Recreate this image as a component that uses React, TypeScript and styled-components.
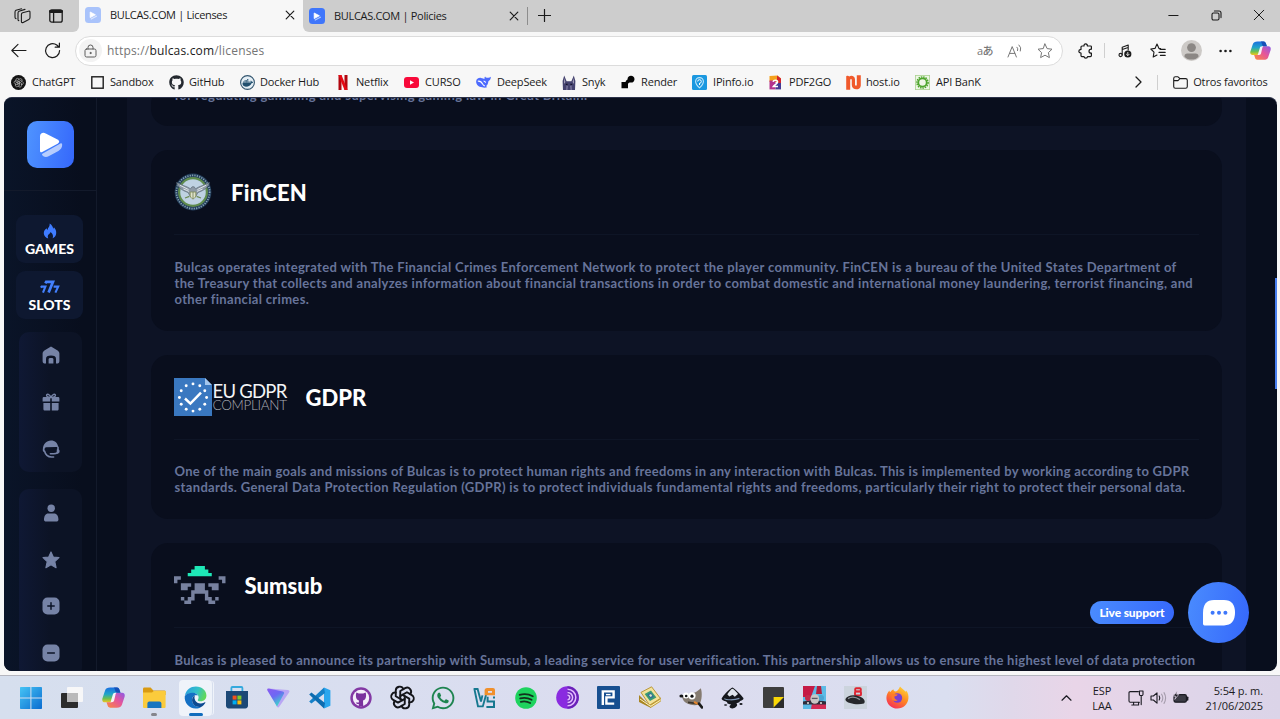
import React from "react";
import styled, { createGlobalStyle } from "styled-components";
import { FaGithub, FaWhatsapp, FaDocker } from "react-icons/fa6";
import { TbBrandOpenai } from "react-icons/tb";

const GlobalStyle = createGlobalStyle`
  * { box-sizing: border-box; }
  body { margin: 0; background: #f7f7f7; font-family: "Open Sans", "Noto Sans", sans-serif; }
  svg { display: block; flex: none; }
`;

/* ---------- browser window ---------- */
const Window = styled.div`
  width: 1280px;
  height: 719px;
  display: flex;
  flex-direction: column;
  overflow: hidden;
  background: #f7f7f7;
  color: #1b1b1b;
`;

const TabStrip = styled.div`
  height: 32px;
  flex: none;
  display: flex;
  align-items: stretch;
  background: #cdcdcd;
`;

const StripTools = styled.div`
  width: 79px;
  display: flex;
  align-items: center;
  gap: 18px;
  padding: 0 0 1px 14px;
  border-bottom-right-radius: 6px;
  background: #cdcdcd;
`;

const StripShade = styled.div`
  display: flex;
  background: #f7f7f7;
`;

const StripRest = styled.div<{ $curved?: boolean }>`
  flex: 1;
  display: flex;
  align-items: center;
  padding-bottom: 1px;
  background: #cdcdcd;
  border-bottom-left-radius: ${(p) => (p.$curved ? "6px" : "0")};
`;

const Tab = styled.div<{ $active?: boolean; $width: number }>`
  width: ${(p) => p.$width}px;
  height: ${(p) => (p.$active ? 32 : 30)}px;
  display: flex;
  align-items: center;
  padding: 0 9px ${(p) => (p.$active ? 2 : 0)}px 6px;
  border-radius: ${(p) => (p.$active ? "7px 7px 0 0" : "0")};
  background: ${(p) => (p.$active ? "#f7f7f7" : "transparent")};
`;

const TabTitle = styled.span<{ $track: number }>`
  flex: 1;
  margin-left: 9px;
  font-size: 11px;
  line-height: 16px;
  letter-spacing: ${(p) => p.$track}px;
  white-space: nowrap;
`;

const StripDivider = styled.span`
  width: 1px;
  height: 18px;
  margin-right: 10px;
  background: #8d8d8d;
`;

const WindowControls = styled.div`
  margin-left: auto;
  display: flex;
  gap: 32px;
  padding-right: 16px;
`;

const Toolbar = styled.div`
  height: 37px;
  flex: none;
  display: flex;
  align-items: center;
  padding: 0 9px 0 10px;
`;

const NavButtons = styled.div`
  display: flex;
  gap: 17px;
  width: 65px;
`;

const AddressBar = styled.div`
  width: 988px;
  height: 30px;
  display: flex;
  align-items: center;
  padding: 0 9px 0 3px;
  border: 1px solid #dcdcdc;
  border-radius: 15px;
  background: #fff;
`;

const LockBadge = styled.span`
  width: 23px;
  height: 23px;
  display: grid;
  place-items: center;
  border-radius: 50%;
  background: #f3f3f3;
`;

const Url = styled.span`
  flex: 1;
  margin-left: 5px;
  font-size: 12px;
  line-height: 17px;
  letter-spacing: 0.18px;
  color: #757575;
  b { font-weight: 400; color: #1b1b1b; }
`;

const AddressTools = styled.div`
  display: flex;
  align-items: center;
  gap: 14px;
  color: #777;
`;

const Translate = styled.span`
  font: 500 11px/14px "Open Sans", "Noto Sans CJK JP", sans-serif;
  letter-spacing: -0.5px;
`;

const ToolbarTools = styled.div`
  flex: 1;
  display: flex;
  align-items: center;
  padding-left: 14.5px;
`;

const ToolSlot = styled.span<{ $before: number }>`
  margin-left: ${(p) => p.$before}px;
`;

const ThinRule = styled.span<{ $h: number }>`
  display: block;
  width: 1px;
  height: ${(p) => p.$h}px;
  background: #cfcfcf;
`;

const Bookmarks = styled.div`
  height: 28px;
  flex: none;
  display: flex;
  align-items: center;
  padding: 0 12.5px 2px 11px;
  font-size: 11px;
  line-height: 16px;
  letter-spacing: -0.16px;
  white-space: nowrap;
`;

const Bookmark = styled.div<{ $width?: number; $gap?: number }>`
  width: ${(p) => (p.$width ? `${p.$width}px` : "auto")};
  flex: none;
  display: flex;
  align-items: center;
  gap: ${(p) => p.$gap ?? 6}px;
`;

const BookmarkEnd = styled.div`
  margin-left: auto;
  display: flex;
  align-items: center;
  gap: 15px;
`;

/* ---------- web page ---------- */
const PageFrame = styled.div`
  height: 574px;
  flex: none;
  display: flex;
  padding: 0 3px 0 4px;
`;

const Page = styled.div`
  position: relative;
  width: 1273px;
  height: 574px;
  display: flex;
  overflow: hidden;
  border-radius: 8px;
  border-top: 1px solid #2b3148;
  background: #080e1d;
  font-family: Lato, sans-serif;
`;

const Sidebar = styled.div`
  width: 93px;
  flex: none;
  border-right: 1px solid #131a2b;
  background: linear-gradient(90deg, #0a1428, #080e1d 85%);
`;

const LogoBox = styled.div`
  height: 93px;
  display: grid;
  place-items: center;
  border-bottom: 1px solid #131a2b;
  margin-bottom: 23.5px;
`;

const Logo = styled.div`
  width: 47px;
  height: 47px;
  border-radius: 10px;
  background: linear-gradient(100deg, #4f94ff, #3567fb);
`;

const ModeButton = styled.div`
  width: 67px;
  height: 48px;
  margin: 0 0 8px 12px;
  display: flex;
  flex-direction: column;
  align-items: center;
  padding-top: 8px;
  border-radius: 9px;
  background: #0e1830;
  color: #fff;
  font-size: 14px;
  font-weight: 900;
  line-height: 20px;
`;

const IconGroup = styled.div`
  width: 63px;
  margin: 13.5px 0 17px 15px;
  border-radius: 10px;
  background: linear-gradient(90deg, #0f1834, #0c1325 50%);
`;

const IconCell = styled.div`
  height: 46.8px;
  display: grid;
  place-items: center;
  color: #7683a6;
`;

const Content = styled.div`
  width: 1119px;
  flex: none;
  margin-left: 30px;
  padding: 0 24px;
  background: #0d1325;
`;

const Card = styled.section<{ $cut?: boolean }>`
  padding: ${(p) => (p.$cut ? "0 23px 23px" : "23px 23px 24px")};
  margin-top: ${(p) => (p.$cut ? "-11px" : "24px")};
  border-radius: 17px;
  background: #090e1d;
`;

const CardHead = styled.div`
  height: 62px;
  display: flex;
  align-items: flex-start;
  gap: 19.5px;
  border-bottom: 1px solid #0e1526;
  margin-bottom: 23.5px;
`;

const CardTitle = styled.h2<{ $track?: number }>`
  margin: 0 0 0 -0.5px;
  color: #fff;
  font-size: 22px;
  font-weight: 900;
  line-height: 39px;
  letter-spacing: ${(p) => p.$track ?? 0}px;
`;

const Line = styled.div<{ $track: number }>`
  padding-left: 0.5px;
  color: #67749a;
  font-size: 13px;
  font-weight: 700;
  line-height: 16px;
  letter-spacing: ${(p) => p.$track}px;
  white-space: nowrap;
`;

const ScrollThumb = styled.div`
  position: absolute;
  right: 0;
  top: 180px;
  width: 2px;
  height: 111px;
  background: #4a80f0;
`;

const SupportLabel = styled.div`
  position: absolute;
  right: 103px;
  top: 503px;
  width: 84px;
  height: 23px;
  border-radius: 12px;
  background: linear-gradient(100deg, #4a8cfe, #3668fb);
  color: #fff;
  font-size: 12px;
  font-weight: 900;
  line-height: 23px;
  letter-spacing: -0.14px;
  text-align: center;
`;

const SupportButton = styled.div`
  position: absolute;
  right: 28px;
  top: 484px;
  width: 61px;
  height: 61px;
  display: grid;
  place-items: center;
  border-radius: 50%;
  background: linear-gradient(100deg, #4a8cfe, #3567fb);
`;

/* ---------- taskbar ---------- */
const Taskbar = styled.div`
  height: 44px;
  flex: none;
  margin-top: 4px;
  display: flex;
  align-items: center;
  padding: 0 17px 0 10px;
  border-top: 1px solid #b5b6bf;
  background: linear-gradient(90deg, #d6dfee 0, #d9def0 28%, #dcdcef 55%, #dadff0 74%, #e0d8ea 79%, #e9d5e8 84%, #ded5e9 94%, #dbd4e8 100%);
`;

const AppSlot = styled.div<{ $mark?: "running" | "focused" }>`
  position: relative;
  width: 41.27px;
  height: 43px;
  flex: none;
  display: grid;
  place-items: center;
  &::after {
    content: "";
    position: absolute;
    bottom: 3px;
    left: calc(50% - ${(p) => (p.$mark === "focused" ? 7 : 3)}px);
    width: ${(p) => (p.$mark === "focused" ? 14 : p.$mark ? 6 : 0)}px;
    height: 3px;
    border-radius: 2px;
    background: ${(p) => (p.$mark === "focused" ? "#0f6cbd" : "#85858c")};
  }
`;

const AppTile = styled.div<{ $focused?: boolean }>`
  width: 33px;
  height: 36px;
  display: grid;
  place-items: center;
  border-radius: 4px;
  background: ${(p) => (p.$focused ? "#eff3fa" : "transparent")};
  box-shadow: ${(p) => (p.$focused ? "2px 0 0 -1px #d6deed, 3px 0 0 -1px #eff3fa" : "none")};
`;

const Tray = styled.div`
  margin-left: auto;
  display: flex;
  align-items: center;
  font-size: 11px;
  line-height: 15px;
  letter-spacing: -0.08px;
  color: #1b1b22;
`;

const Stack = styled.div<{ $align: string; $width: number }>`
  width: ${(p) => p.$width}px;
  text-align: ${(p) => p.$align};
  white-space: nowrap;
`;

const TrayIcons = styled.div`
  display: flex;
  align-items: center;
  gap: 6px;
  margin-left: -4px;
  padding-right: 1px;
`;

/* ---------- small drawings ---------- */
const stroke = { fill: "none", stroke: "currentColor", strokeLinecap: "round", strokeLinejoin: "round" } as const;

const Favicon = ({ faded }: { faded?: boolean }) => (
  <svg width="16" height="16" viewBox="0 0 16 16">
    <rect width="16" height="16" rx="3.5" fill={faded ? "#a9c3fb" : "#3f76fb"} />
    <path d="M5.2 5 L10.4 7.8 L5.2 10.6Z" fill="#fff" stroke="#fff" strokeWidth=".8" strokeLinejoin="round" />
    <path d="M6.2 12 L11.4 9.2" stroke="#fff" strokeOpacity=".6" strokeWidth="1.2" strokeLinecap="round" />
  </svg>
);

const Cross = ({ size = 8, w = 1.2 }: { size?: number; w?: number }) => (
  <svg width={size} height={size} viewBox="0 0 8 8" {...stroke} strokeWidth={w} overflow="visible">
    <path d="M0.2 0.2 L7.8 7.8 M7.8 0.2 L0.2 7.8" />
  </svg>
);

const OpenAiBadge = () => (
  <svg width="15" height="15" viewBox="0 0 15 15">
    <circle cx="7.5" cy="7.5" r="7.5" fill="#141414" />
    <TbBrandOpenai x="2.2" y="2.2" width="10.6" height="10.6" color="#c9c9c9" strokeWidth={1.4} />
  </svg>
);

const DockerBadge = () => (
  <svg width="15" height="15" viewBox="0 0 15 15">
    <circle cx="7.5" cy="7.5" r="6.9" fill="#e4eef5" stroke="#33566f" strokeWidth="1.1" />
    <FaDocker x="2.3" y="2.3" width="10.4" height="10.4" color="#21506f" />
  </svg>
);

const NetflixMark = () => (
  <svg width="10" height="15" viewBox="0 0 10 15">
    <path d="M0.5 0H3.5V15H0.5Z M6.5 0H9.5V15H6.5Z" fill="#b1060f" />
    <path d="M0.5 0H3.5L9.5 15H6.5Z" fill="#e50914" />
  </svg>
);

const YoutubeMark = () => (
  <svg width="15" height="11" viewBox="0 0 15 11">
    <rect width="15" height="11" rx="3" fill="#f8093a" />
    <path d="M6 3.2 L10 5.5 L6 7.8Z" fill="#fff" />
  </svg>
);

const DeepSeekMark = () => (
  <svg width="15" height="12" viewBox="0 0 15 12">
    <path
      d="M8.6 3 C8.2 2 8.7 1 9.1 .5 C9.8 1.8 11 2 12.2 1.8 C13.2 1.7 14 1.3 14.9 .8 C14.8 3.3 13.6 4.7 12.4 5.2 C12.2 7.5 11.3 9 10.2 10 L11 11.2 C9.5 11.8 7.6 11.7 6.2 11.3 C2.6 11.1 0.2 8.8 .1 5.6 C.3 2.7 2.6 1.6 5 1.9 C6.5 2 7.7 2.5 8.6 3Z"
      fill="#4d6bfe"
    />
    <path d="M1.8 5.2 C3.6 4.8 5.6 6 6.8 8.2 C7.4 9.2 8 9.7 8.8 9.9 M7.6 5 C8.7 5.1 9.5 5.8 9.6 6.8" fill="none" stroke="#fff" strokeWidth="1.1" />
  </svg>
);

const SnykMark = () => (
  <svg width="14" height="15" viewBox="0 0 14 15">
    <path d="M1 15 L.6 6 L2.2 .5 L4.6 6.2 H9.4 L11.8 .5 L13.4 6 L13 15Z" fill="#45436f" />
    <path d="M2.2 3 L3.4 7 L2 9Z M11.8 3 L10.6 7 L12 9Z" fill="#a9a5bd" />
    <path d="M4.4 10.5 L6 11 L5.5 15 H4Z M9.6 10.5 L8 11 L8.5 15 H10Z" fill="#77739a" />
    <path d="M3.8 9.4H5.6 M8.4 9.4H10.2" stroke="#16142c" strokeWidth="1.1" />
  </svg>
);

const RenderMark = () => (
  <svg width="14" height="14" viewBox="0 0 14 14">
    <path d="M.5 7 H4.6 C4.8 5.6 5.6 5.4 6.5 4.6 C6.5 2 8 .8 10 .8 C12 .8 13.5 2.2 13.5 4.2 C13.5 6.2 12 7.6 10 7.6 C8.2 7.6 7.4 8 7 9 V13.2 H.5Z" fill="#050505" />
  </svg>
);

const IpInfoMark = () => (
  <svg width="15" height="15" viewBox="0 0 15 15">
    <rect width="15" height="15" rx="1.5" fill="#1b98e0" />
    <path d="M7.5 12.8 C5 10.5 3.6 8.8 3.6 6.5 A3.9 3.9 0 0 1 11.4 6.5 C11.4 8.8 10 10.5 7.5 12.8Z" fill="none" stroke="#bfe6fb" strokeWidth="1.1" />
    <path d="M7.5 10 V8 M5.7 6.5 a1.8 1.8 0 1 1 1.8 1.8" fill="none" stroke="#fff" strokeWidth="1" />
  </svg>
);

const PdfMark = () => (
  <svg width="13" height="15" viewBox="0 0 13 15">
    <path d="M.5 1 L8.6 .4 L12 3.5 V7 H.5Z" fill="#f5a21c" />
    <path d="M8 .4 L12 3.5 V9 H8Z" fill="#d2262d" />
    <path d="M.5 5.5 H6.5 V14.4 H.5Z" fill="#b3328d" />
    <path d="M6.5 8 H12 V14.4 H6.5Z" fill="#463a94" />
    <path d="M4 6.8 C4.6 4.8 8.6 4.8 8.6 7 C8.6 8.8 5.6 9.4 4.2 11.6 H9" fill="none" stroke="#fff" strokeWidth="1.5" />
  </svg>
);

const HostMark = () => (
  <svg width="15" height="15" viewBox="0 0 15 15" fill="#f0592b">
    <path d="M.2 1.2 C1.4 .4 2.6 .6 3.2 1.4 C5.6 -.2 9 1.2 9 4.4 V9.6 C9 11 10.6 11.2 10.8 10 V.2 H14.8 V10.4 C14.6 15.4 6 16 5.8 10 V5 C5.8 3.8 4.2 3.8 4.2 5 V14.8 H.2Z" />
  </svg>
);

const ApiMark = () => (
  <svg width="15" height="15" viewBox="0 0 15 15">
    <rect x=".4" y=".4" width="14.2" height="14.2" fill="#eef6e6" stroke="#a9d390" strokeWidth=".8" />
    <circle cx="7.5" cy="7.5" r="5.6" fill="none" stroke="#4ea52d" strokeWidth="1.5" strokeDasharray="1.5 .9" />
    <circle cx="7.5" cy="7.5" r="4.2" fill="none" stroke="#4ea52d" strokeWidth="1.8" />
  </svg>
);

const Ribbon = ({ size, id }: { size: number; id: string }) => (
  <svg width={size} height={size * 0.92} viewBox="0 0 24 22">
    <defs>
      <linearGradient id={`${id}a`} x1="0" y1="0" x2="0" y2="1">
        <stop offset="0" stopColor="#1b6fe0" />
        <stop offset=".45" stopColor="#1fa5c9" />
        <stop offset=".75" stopColor="#6fc04f" />
        <stop offset="1" stopColor="#f5c51c" />
      </linearGradient>
      <linearGradient id={`${id}b`} x1="1" y1="0" x2="0" y2="1">
        <stop offset="0" stopColor="#8a5be8" />
        <stop offset=".45" stopColor="#e5559b" />
        <stop offset="1" stopColor="#fb8a3c" />
      </linearGradient>
    </defs>
    <path d="M8.5 .5 H15.5 C17.5 .5 18 2 18.6 4 L19.3 6 H16 C14 6 13.3 7 12.8 8.6 L10.8 14.2 C10.3 15.7 9.4 16 8 16 H3 C.6 16 -.2 14 .5 11.6 L3.2 3.6 C4 1.4 5.5 .5 8.5 .5Z" fill={`url(#${id}a)`} />
    <path d="M15.5 21.5 H8.5 C6.5 21.5 6 20 5.4 18 L4.7 16 H8 C10 16 10.7 15 11.2 13.4 L13.2 7.8 C13.7 6.3 14.6 6 16 6 H21 C23.4 6 24.2 8 23.5 10.4 L20.8 18.4 C20 20.6 18.5 21.5 15.5 21.5Z" fill={`url(#${id}b)`} />
    <path d="M12 .5 H15.5 C17.5 .5 18 2 18.6 4 L19.3 6 H15.3 C14.5 6 14 4.5 13.6 3 C13.2 1.5 12.8 .8 12 .5Z" fill="#1550b8" />
    <path d="M11.4 7.4 C11.8 6.2 13 6 15.6 6 C14.6 6.4 14.4 7 14 8.2 L12.6 14.2 C12.2 15.6 11 16 8.4 16 C9.4 15.4 9.2 14.6 9.6 13.4Z" fill="#f4f4f8" />
  </svg>
);

/* ---------- page drawings ---------- */
const Seal = () => (
  <svg width="38" height="38" viewBox="0 0 38 38">
    <circle cx="19" cy="19" r="18.4" fill="#243f5c" />
    <circle cx="19" cy="19" r="16.6" fill="none" stroke="#8fa9b9" strokeWidth="1.7" strokeDasharray="1.1 1.3" />
    <circle cx="19" cy="19" r="13.9" fill="#b9cfdf" stroke="#5f8b4c" strokeWidth="2.2" />
    <circle cx="19" cy="19" r="12" fill="#bfd2e2" />
    <path d="M2.5 9.5 C8 12.4 12.5 13 16.5 15.8 L18 13.8 H20.2 L21.5 15.8 C25.5 13 30 12.4 35.5 9.5 C34 14.5 30 17.5 24 19.5 L22 23 H16 L14 19.5 C8 17.5 4 14.5 2.5 9.5Z" fill="#8e9aa6" stroke="#54636f" strokeWidth=".6" />
    <path d="M6 12.3 L14.6 16.6 M9.5 16 L15 18.4 M32 12.3 L23.4 16.6 M28.5 16 L23 18.4" stroke="#e6edf1" strokeWidth=".9" />
    <path d="M16.2 19 H21.8 V22.5 C21.8 25 19 26 19 26 S16.2 25 16.2 22.5Z" fill="#e0e3c9" stroke="#7e8a50" strokeWidth=".8" />
    <path d="M19 19V26" stroke="#6d7b57" strokeWidth=".8" />
    <path d="M11 25 L15.4 23.4 M27 25 L22.6 23.4" stroke="#6c8a54" strokeWidth="1.2" />
  </svg>
);

const GdprLogo = styled.div`
  width: 112.5px;
  display: flex;
`;
const GdprWords = styled.div`
  padding: 6px 0 0 0.5px;
  font-family: Lato, sans-serif;
  white-space: nowrap;
`;
const GdprTop = styled.div`
  color: #f3f4f6;
  font-size: 18.5px;
  line-height: 15px;
  letter-spacing: -0.75px;
`;
const GdprBottom = styled.div`
  color: #a9acb4;
  font-size: 13.5px;
  font-weight: 300;
  line-height: 13px;
  letter-spacing: -0.3px;
`;

const GdprMark = () => (
  <svg width="38" height="38" viewBox="0 0 38 38">
    <path d="M0 0 H31 L38 7 V38 H0Z" fill="#3a78c0" />
    <path d="M31 0 L38 7 H31Z" fill="#a4c6ec" />
    {Array.from({ length: 12 }, (_, i) => {
      const a = (i * Math.PI) / 6;
      return <circle key={i} cx={19 + 13.6 * Math.sin(a)} cy={19.5 - 13.6 * Math.cos(a)} r="1.45" fill="#fff" />;
    })}
    <path d="M11 20.5 L16.4 25.6 L27 14.6" fill="none" stroke="#fff" strokeWidth="2.5" />
  </svg>
);

const SumsubMark = () => (
  <svg width="51.5" height="38" viewBox="0 0 15 11" preserveAspectRatio="none">
    <path d="M6 0H9V1H10V2H11V3H4V2H5V1H6Z" fill="#1ee8b7" />
    <path
      d="M0 3H2V4H1V5H0Z M13 3H15V5H14V4H13Z M2 5H5V6H4V7H2Z M10 5H13V7H11V6H10Z M6 5H9V7H10V9H11V10H12V11H10V10H9V8H6V10H5V11H3V10H4V9H5V7H6Z M2 9H3V10H2Z M12 9H13V10H12Z"
      fill="#77819f"
    />
  </svg>
);

const LogoGlyph = () => (
  <svg width="47" height="47" viewBox="0 0 47 47">
    <path d="M13 15.5 C13 12.3 15.8 11 18.7 12.4 L30.5 18.6 C32.8 20 32.6 21.4 30.6 22.8 L15.2 31 C13.8 31.6 13 31.2 13 29.8Z" fill="#fff" />
    <path d="M15.8 32.6 L33.4 22.4 C34.6 22 35.1 22.6 35.2 23.8 C35.2 27 33.6 28.6 31.4 29.9 L21.6 35.3 C18.8 36.6 15.6 35.6 15 33.8 C14.9 33.2 15.2 32.9 15.8 32.6Z" fill="#fff" fillOpacity=".62" />
  </svg>
);

const Flame = () => (
  <svg width="14" height="16" viewBox="0 0 14 17">
    <path d="M6.7 .4 C9.4 2.2 10.2 4.2 10.4 6 C10.9 5.6 11.1 5 11.2 4.4 C13 6.4 13.7 8.4 13.6 10.6 C13.5 13.6 11.8 15.4 9.8 16.3 C10.7 14.2 10.2 11.6 7.6 9.6 C7.3 11.4 4.6 12.2 4.6 14.2 C4.6 15 4.8 15.7 5.1 16.4 C2.4 15.6 .5 13.6 .4 10.8 C.4 8.2 1.8 6.8 3.4 5.6 C3.5 6.4 3.8 7 4.3 7.4 C4.8 4.6 7 3.6 6.7 .4Z" fill="#3f7cff" />
  </svg>
);

const Sevens = () => (
  <svg width="20" height="16" viewBox="0 0 20 16" fill="none" stroke="#4380ff">
    <path d="M5.4 4.4 L6.2 2.8 H13 L8.6 13.6" strokeWidth="2.7" />
    <path d="M.9 8.6 L1.6 7.6 H5.4 L3 13.6" strokeWidth="2.1" />
    <path d="M13.6 7.6 H18.2 L15.4 13.6" strokeWidth="2.1" />
  </svg>
);

const menuA = [
  <svg key="home" width="18" height="18" viewBox="0 0 18 18" fill="currentColor">
    <path d="M9 .4 L15.6 4.4 C16.8 5.2 17.4 6.2 17.4 7.6 V15 C17.4 16.8 16.4 17.6 14.8 17.6 H14 V13 C14 10.4 12.4 9.6 9 9.6 S4 10.4 4 13 V17.6 H3.2 C1.6 17.6 .6 16.8 .6 15 V7.6 C.6 6.2 1.2 5.2 2.4 4.4Z" />
    <path d="M6.6 17.6 V13.4 C6.6 12.4 7.4 12 9 12 S11.4 12.4 11.4 13.4 V17.6Z" />
  </svg>,
  <svg key="gift" width="18" height="18" viewBox="0 0 18 18" fill="currentColor">
    <path d="M.6 5.6 C.6 4.4 1.2 4 2.2 4 H8.2 V8.4 H.6Z M9.8 4 H15.8 C16.8 4 17.4 4.4 17.4 5.6 V8.4 H9.8Z M1.4 10 H8.2 V17.6 H3 C2 17.6 1.4 17 1.4 16Z M9.8 10 H16.6 V16 C16.6 17 16 17.6 15 17.6 H9.8Z" />
    <path d="M9 4.4 C7.6 1.2 4.8 .4 4.6 2.4 C4.6 3.6 6 4.2 9 4.4 C12 4.2 13.4 3.6 13.4 2.4 C13.2 .4 10.4 1.2 9 4.4Z" fill="none" stroke="currentColor" strokeWidth="1.4" />
  </svg>,
  <svg key="support" width="18" height="18" viewBox="0 0 18 18" fill="currentColor">
    <path d="M9 .4 C13 .4 15.8 3 16.2 7 C15 7.2 14.4 6.9 13.6 7 L4 7.2 C3.4 7.3 2.8 8 2.6 9 L2.4 12 C1.2 11.6 .6 10.8 .8 9.4 C1 4 4.4 .4 9 .4Z" />
    <path d="M2.5 11 C3.4 14.6 5.6 17 9.6 17 H11.6 M16 7.2 V12.2 C15 13.6 12.8 13.9 8.4 13.8" fill="none" stroke="currentColor" strokeWidth="1.6" strokeLinecap="round" />
    <path d="M14.8 9.4 C16.6 9 17.8 10 17.6 11.4 C17.4 13.2 16.2 13.8 14.6 13.8Z" />
  </svg>,
];

const menuB = [
  <svg key="user" width="18" height="18" viewBox="0 0 18 18" fill="currentColor">
    <circle cx="9.2" cy="4.2" r="3.7" />
    <path d="M6.4 9.4 H12 C14.8 9.4 16.4 12 16.4 15.4 C16.4 16.8 15.6 17.6 14.2 17.6 H4.2 C2.8 17.6 2 16.8 2 15.4 C2 12 3.6 9.4 6.4 9.4Z" />
  </svg>,
  <svg key="star" width="18" height="18" viewBox="0 0 18 18" fill="currentColor">
    <path d="M9 .9 L11.3 6 L17 6.6 L12.8 10.5 L14.1 16.7 L9 13.8 L3.9 16.7 L5.2 10.5 L1 6.6 L6.7 6Z" stroke="currentColor" strokeWidth="1.1" strokeLinejoin="round" />
  </svg>,
  <svg key="plus" width="18" height="18" viewBox="0 0 18 18">
    <rect x=".5" y=".5" width="17" height="17" rx="5" fill="currentColor" />
    <path d="M9 5.8 V12.2 M5.8 9 H12.2" stroke="#0c1427" strokeWidth="1.5" strokeLinecap="round" />
  </svg>,
  <svg key="minus" width="18" height="18" viewBox="0 0 18 18">
    <rect x=".5" y=".5" width="17" height="17" rx="5" fill="currentColor" />
    <path d="M5.6 9 H12.4" stroke="#0c1427" strokeWidth="1.5" strokeLinecap="round" />
  </svg>,
];

/* ---------- taskbar drawings ---------- */
const WindowsMark = () => (
  <svg width="22" height="22" viewBox="0 0 22 22">
    <defs>
      <linearGradient id="win" x1="0" y1="0" x2="1" y2="1">
        <stop offset="0" stopColor="#46c4f5" />
        <stop offset="1" stopColor="#0a6cd0" />
      </linearGradient>
    </defs>
    <path d="M0 .8 Q0 0 .8 0 H10.4 V10.4 H0Z M11.4 0 H21.2 Q22 0 22 .8 V10.4 H11.4Z M0 11.4 H10.4 V22 H.8 Q0 22 0 21.2Z M11.4 11.4 H22 V21.2 Q22 22 21.2 22 H11.4Z" fill="url(#win)" />
  </svg>
);

const TaskViewMark = () => (
  <svg width="22" height="22" viewBox="0 0 22 22">
    <rect x="0" y="6" width="17" height="15" rx="1" fill="#2c2c2c" />
    <rect x="6" y="0" width="16" height="15" rx="1" fill="#f7f7f8" />
    <rect x="6" y="6" width="11" height="9" fill="#b9b9ba" />
  </svg>
);

const FolderMark = () => (
  <svg width="23" height="22" viewBox="0 0 23 22">
    <path d="M0 2 Q0 .6 1.4 .6 H7.6 L10.4 3.4 H21.4 Q22.6 3.4 22.6 4.6 V8 H0Z" fill="#d99a12" />
    <path d="M0 5.6 H9 L10.8 4 H22.6 V20 Q22.6 21 21.6 21 H1 Q0 21 0 20Z" fill="#fbcb3c" />
    <path d="M4.4 21 V16.6 Q4.4 14.6 6.4 14.6 H16.4 Q18.4 14.6 18.4 16.6 V21Z" fill="#1674c0" />
  </svg>
);

const EdgeMark = () => (
  <svg width="23" height="23" viewBox="0 0 24 24">
    <defs>
      <linearGradient id="edgeTop" x1="0" y1=".2" x2="1" y2=".5">
        <stop offset="0" stopColor="#2a9fe0" />
        <stop offset=".55" stopColor="#34c1c9" />
        <stop offset="1" stopColor="#63d957" />
      </linearGradient>
    </defs>
    <path d="M1 9.6 C2.4 4 6.8 .6 12.4 .6 C18.8 .6 23.4 5 23.4 10 C23.4 13.8 20.6 16 17.4 16 C15 16 13.8 15.2 14.6 14 C16.4 11.2 14.4 7.4 9.8 7.2 C6 7 2.6 8.4 1 9.6Z" fill="url(#edgeTop)" />
    <path d="M.8 10.4 C2.6 8 6 6.9 9.4 7.1 C12 7.3 13.8 8.5 14.4 10 C10.4 8.6 8 12 8.4 15.2 C8.8 19.6 12.8 22.6 17.8 21.8 C16.2 23 14 23.5 12 23.4 C5.4 23.2 0 17.6 .8 10.4Z" fill="#1470c4" />
    <path d="M8.4 15.2 C8.2 12.2 9.8 10.2 11.4 9.8 C9.8 13 12.4 18.4 17.6 18.2 C19.6 18.2 21 17.4 21.8 17 C22.4 16.8 22.5 17.2 22.3 17.6 C21.2 19.6 19.6 21.2 17.8 21.8 C12.8 22.8 8.8 19.6 8.4 15.2Z" fill="#0c4a91" />
  </svg>
);

const StoreMark = () => (
  <svg width="22" height="23" viewBox="0 0 22 23">
    <path d="M5.4 5 V2 Q5.4 1 6.4 1 H15.4 Q16.4 1 16.4 2 V5" fill="none" stroke="#35a9dd" strokeWidth="1.8" />
    <path d="M0 5 H22 V19.6 Q22 22.4 19.2 22.4 H2.8 Q0 22.4 0 19.6Z" fill="#1c4876" />
    <rect x="6.6" y="9.6" width="4" height="4" fill="#f1511b" />
    <rect x="11.4" y="9.6" width="4" height="4" fill="#80cc28" />
    <rect x="6.6" y="14.4" width="4" height="4" fill="#00adef" />
    <rect x="11.4" y="14.4" width="4" height="4" fill="#fbbc09" />
  </svg>
);

const VpnMark = () => (
  <svg width="23" height="20" viewBox="0 0 23 20">
    <defs>
      <linearGradient id="vpn" x1="0" y1="0" x2=".6" y2="1">
        <stop offset="0" stopColor="#8a5bf0" />
        <stop offset=".5" stopColor="#6d68f4" />
        <stop offset="1" stopColor="#37dfc9" />
      </linearGradient>
    </defs>
    <path d="M1.8 .4 L20.8 2 Q23.4 2.4 22 4.6 L12.4 18.6 Q11 20.4 9.8 18.4Z" fill="#b9a6f4" />
    <path d="M1.6 .4 L15.8 3.6 Q17.8 4.2 16.8 6 L10 18.6 L.4 2.6 Q-.4 .2 1.6 .4Z" fill="url(#vpn)" />
  </svg>
);

const VsCodeMark = () => (
  <svg width="23" height="22" viewBox="0 0 23 22">
    <path d="M16 .4 L22.4 3.2 V18.8 L16 21.6Z" fill="#2aa6ee" />
    <path d="M16 .4 L1.2 14.4 L3.4 16.4 L17 6Z" fill="#1580c8" />
    <path d="M16 21.6 L1.2 7.6 L3.4 5.6 L17 16Z" fill="#0d6cb0" />
  </svg>
);

const GithubDesktopMark = () => (
  <svg width="22" height="22" viewBox="0 0 22 22">
    <circle cx="11" cy="11" r="10.7" fill="#8339a4" />
    <circle cx="11" cy="11" r="8.2" fill="#f4effa" />
    <path d="M6.4 5.4 L8.8 6.4 H13.2 L15.6 5.4 C16.4 7.4 16.6 12.6 13 13.4 L13.2 19 H8.8 V17 C7.2 17.2 6.6 16.4 5.8 15.4 L8.8 15.4 L9 13.4 C5.4 12.6 5.6 7.4 6.4 5.4Z" fill="#7b329e" />
  </svg>
);

const VirtualMark = () => (
  <svg width="23" height="22" viewBox="0 0 23 22">
    <path d="M.6 2 H4.6 L8 14.6 L9.4 8.4 M1.4 2 L5 19.4 H9.8 L13 8" fill="none" stroke="#16788f" strokeWidth="1.9" />
    <path d="M11.6 8.2 V3.6 Q11.6 1 14.2 1 H20 Q22 1 22 3 V8.2Z" fill="#f0902c" />
    <rect x="15" y="4" width="4" height="1.8" fill="#dcdcef" />
    <path d="M14.6 9.8 V14.4 H21 V20 H13.4 M21 11.4 V9.6" fill="none" stroke="#16788f" strokeWidth="2" />
  </svg>
);

const SpotifyMark = () => (
  <svg width="22" height="22" viewBox="0 0 22 22">
    <circle cx="11" cy="11" r="10.8" fill="#1ed35e" />
    <path d="M4.6 7.8 C9 6.6 13.8 7 17.8 9.2 M5.2 11.4 C9 10.4 13 10.8 16.6 12.8 M5.8 14.8 C9 14 12.4 14.4 15.2 16" fill="none" stroke="#12321d" strokeWidth="1.8" strokeLinecap="round" />
  </svg>
);

const TorMark = () => (
  <svg width="23" height="23" viewBox="0 0 23 23">
    <circle cx="11.5" cy="11.5" r="11.3" fill="#8a2be0" />
    <path d="M11.5 .2 A11.3 11.3 0 0 1 11.5 22.8Z" fill="#6a22b8" />
    <path d="M11.5 3.2 A8.3 8.3 0 0 1 11.5 19.8 M11.5 6.4 A5.1 5.1 0 0 1 11.5 16.6 M11.5 9.3 A2.2 2.2 0 0 1 11.5 13.7" fill="none" stroke="#e3bbff" strokeWidth="1.5" />
  </svg>
);

const RevoMark = () => (
  <svg width="23" height="23" viewBox="0 0 23 23">
    <rect width="23" height="23" rx="1" fill="#174f90" />
    <path d="M5.8 19 V5.4 H16.6 V11.4 H9.4 V17.6 H17.2" fill="none" stroke="#fff" strokeWidth="2.4" />
    <path d="M9 8.6 H13.6" stroke="#fff" strokeWidth="1.4" />
  </svg>
);

const NotepadMark = () => (
  <svg width="24" height="23" viewBox="0 0 24 23">
    <path d="M1 9 L13 20.8 L13 22 L1 16Z" fill="#a98522" />
    <path d="M13 21.8 L22.8 15.4 V11.6 L12 17Z" fill="#c5a23a" />
    <path d="M3 6.4 L13.6 .8 L22.4 12.4 L11.6 19.2Z" fill="#f3e29a" stroke="#b38e2c" strokeWidth=".9" />
    <path d="M2 13 L12.6 20.4 L22.6 14" fill="none" stroke="#fff4c0" strokeWidth="1" />
    <path d="M6.6 8 L13 4.6 L18.4 11.4 L12 15Z" fill="#3c9a74" />
    <path d="M9.4 8.6 L12.8 6.8 L15.8 10.8 L12.4 12.6Z" fill="#2f6a9c" />
    <path d="M11 9 L13 8 L14.2 10 L12.4 11Z" fill="#d9e7c0" />
  </svg>
);

const GimpMark = () => (
  <svg width="24" height="22" viewBox="0 0 24 22">
    <path d="M2.6 9 C7 8.6 9 6.6 11 6.4 C15 6 18 5 21.8 1.2 C23.4 5.6 23 12.8 20.6 17.2 C15 19.4 7 17.6 4.2 13Z" fill="#857b70" />
    <circle cx="7" cy="8.6" r="3" fill="#fff" />
    <circle cx="13" cy="8.8" r="3.6" fill="#fff" />
    <circle cx="7.2" cy="9" r="1.3" fill="#111" />
    <circle cx="13" cy="9.2" r="1.6" fill="#111" />
    <ellipse cx="2.4" cy="9" rx="2" ry="1.6" fill="#161616" />
    <path d="M9 15.4 L19 16.6" stroke="#3a332b" strokeWidth="1.6" />
    <path d="M15 15 L20 17.4" stroke="#e5862e" strokeWidth="2" />
    <path d="M20 16.6 L23 20.4" stroke="#1c1c1c" strokeWidth="2.6" strokeLinecap="round" />
  </svg>
);

const InkscapeMark = () => (
  <svg width="23" height="22" viewBox="0 0 23 22">
    <path d="M11.4 .4 C13 .4 21.6 9.4 22.4 11 C23 13 20 13.4 18.6 14.4 C19.4 15.8 14.4 15.4 15.8 17 C17.6 18.6 13.4 21.6 11.2 21.4 C8.6 21.4 7.6 19 9.6 18 C11 17 5.4 17.4 6.2 15.6 C6.6 14.2 .4 14.2 .6 11.6 C1 9.6 9.8 .4 11.4 .4Z" fill="#16181d" />
    <path d="M11.4 1.8 C12.4 1.8 16 5.6 17 7 L13.8 9.8 L11.6 7.8 L8.4 9.4 L6.4 7.4 C7.4 5.6 10.4 1.8 11.4 1.8Z" fill="#dfe4ec" />
    <path d="M3.4 11.6 C5 13 13 13.4 18.4 11.4" fill="none" stroke="#7f96b4" strokeWidth="1.2" />
    <ellipse cx="20" cy="17" rx="1.6" ry=".9" fill="#16181d" />
    <ellipse cx="4.6" cy="18" rx="1.6" ry=".8" fill="#16181d" />
  </svg>
);

const StickyMark = () => (
  <svg width="21" height="21" viewBox="0 0 21 21">
    <rect width="21" height="21" rx="1" fill="#3e3e3e" />
    <path d="M10.6 10 H21 L10.6 20.6Z" fill="#fbd806" />
    <path d="M21 10.4 V21 H10.6Z" fill="#2c2c2c" />
  </svg>
);

const GameMark = () => (
  <svg width="23" height="23" viewBox="0 0 23 23">
    <rect width="23" height="23" fill="#5cbbe6" />
    <path d="M0 0 H12 L8 11 H0Z" fill="#c51a45" />
    <path d="M14 0 H18 L19 8 H13Z" fill="#b51e3e" />
    <path d="M9 17 H23 V23 H8Z" fill="#d42d55" />
    <path d="M0 15.5 L8 14 L15 14 L23 15.5 V18.6 H0Z" fill="#2f2d3b" />
    <circle cx="5" cy="12" r="3" fill="#c12c4c" />
    <circle cx="18" cy="12" r="3" fill="#4aa4d2" />
    <ellipse cx="11.8" cy="13" rx="4.4" ry="4.8" fill="#c9c6c5" />
    <path d="M8.8 12.4 H14.6" stroke="#5a5966" strokeWidth="1.3" />
    <path d="M4 17 H6 M17 17 H19" stroke="#e8e3e1" strokeWidth="1.4" />
  </svg>
);

const MouseMark = () => (
  <svg width="23" height="23" viewBox="0 0 23 23">
    <rect width="23" height="23" fill="#ccd4dd" />
    <rect x="11.2" y="2.2" width="5.6" height="3.2" rx="1" fill="none" stroke="#df2431" strokeWidth="1.9" />
    <rect x="11" y="5.6" width="6" height="3.8" rx="1" fill="none" stroke="#df2431" strokeWidth="1.9" />
    <path d="M1.4 13 C4 8.6 10 8.4 15.6 10.4 C20.4 12 21.8 15.4 20 17.6 C16 18.6 11 18.8 6 17 C3.4 16.4 1.2 15 1.4 13Z" fill="#26282b" />
    <path d="M4 12.6 C8 10 12 11 16 13.6" fill="none" stroke="#8b9299" strokeWidth="1.3" />
  </svg>
);

const FirefoxMark = () => (
  <svg width="23" height="23" viewBox="0 0 23 23">
    <defs>
      <linearGradient id="fox" x1=".8" y1="0" x2=".2" y2="1">
        <stop offset="0" stopColor="#ffd83b" />
        <stop offset=".45" stopColor="#ff8a20" />
        <stop offset="1" stopColor="#f5285c" />
      </linearGradient>
    </defs>
    <path d="M14 .4 C15.4 2 18 3.6 19.4 5.4 C20 5.6 20.4 5.2 20.2 4.4 C22 6.6 22.8 9.4 22.4 12.6 C21.8 18.6 17.2 22.6 11.4 22.6 C5.2 22.6 .4 17.8 .4 12 C.4 8.6 1.8 6 3.4 4.4 C3.4 5.2 3.8 5.8 4.4 6 C5.4 4.6 6.6 3.6 7.4 3.2 C7.4 4.4 8.2 5.2 9.4 5.6 C11 5.2 12.6 4 14 .4Z" fill="url(#fox)" />
    <circle cx="11.4" cy="12" r="4.8" fill="#7a3fd0" />
    <path d="M5.4 8.6 C8 7.4 9.6 8.2 11.8 8.6 C10.8 10 9.4 10.4 8.4 10.6 C8.2 12.6 9.6 14 11.8 14 C9.8 16 6.6 15 5.8 12.8Z" fill="#ff7b29" />
  </svg>
);

const apps: { icon: React.ReactNode; mark?: "running" | "focused" }[] = [
  { icon: <WindowsMark /> },
  { icon: <TaskViewMark /> },
  { icon: <Ribbon size={23} id="taskRibbon" /> },
  { icon: <FolderMark />, mark: "running" },
  { icon: <EdgeMark />, mark: "focused" },
  { icon: <StoreMark /> },
  { icon: <VpnMark /> },
  { icon: <VsCodeMark /> },
  { icon: <GithubDesktopMark /> },
  { icon: <TbBrandOpenai size={27} color="#14151a" strokeWidth={1.7} /> },
  { icon: <FaWhatsapp size={26} color="#1e8450" /> },
  { icon: <VirtualMark /> },
  { icon: <SpotifyMark /> },
  { icon: <TorMark /> },
  { icon: <RevoMark /> },
  { icon: <NotepadMark /> },
  { icon: <GimpMark /> },
  { icon: <InkscapeMark /> },
  { icon: <StickyMark /> },
  { icon: <GameMark /> },
  { icon: <MouseMark /> },
  { icon: <FirefoxMark /> },
];

const bookmarks: { label: string; icon: React.ReactNode; width: number; gap?: number }[] = [
  { label: "ChatGPT", icon: <OpenAiBadge />, width: 80 },
  {
    label: "Sandbox",
    icon: (
      <svg width="13" height="13" viewBox="0 0 13 13">
        <rect x=".8" y=".8" width="11.4" height="11.4" fill="none" stroke="#1c1c1c" strokeWidth="1.4" />
      </svg>
    ),
    width: 78,
  },
  { label: "GitHub", icon: <FaGithub size={15} color="#24292f" />, width: 71, gap: 5 },
  { label: "Docker Hub", icon: <DockerBadge />, width: 98, gap: 5 },
  { label: "Netflix", icon: <NetflixMark />, width: 66, gap: 8 },
  { label: "CURSO", icon: <YoutubeMark />, width: 72 },
  { label: "DeepSeek", icon: <DeepSeekMark />, width: 86 },
  { label: "Snyk", icon: <SnykMark />, width: 59 },
  { label: "Render", icon: <RenderMark />, width: 71 },
  { label: "IPinfo.io", icon: <IpInfoMark />, width: 77 },
  { label: "PDF2GO", icon: <PdfMark />, width: 77, gap: 7 },
  { label: "host.io", icon: <HostMark />, width: 69, gap: 5 },
  { label: "API BanK", icon: <ApiMark />, width: 68 },
];

const cards: { title: string; track?: number; logo: React.ReactNode; lines: [string, number][] }[] = [
  {
    title: "FinCEN",
    track: 0.25,
    logo: <Seal />,
    lines: [
      ["Bulcas operates integrated with The Financial Crimes Enforcement Network to protect the player community. FinCEN is a bureau of the United States Department of", 0.337],
      ["the Treasury that collects and analyzes information about financial transactions in order to combat domestic and international money laundering, terrorist financing, and", 0.314],
      ["other financial crimes.", 0.33],
    ],
  },
  {
    title: "GDPR",
    logo: (
      <GdprLogo>
        <GdprMark />
        <GdprWords>
          <GdprTop>EU GDPR</GdprTop>
          <GdprBottom>COMPLIANT</GdprBottom>
        </GdprWords>
      </GdprLogo>
    ),
    lines: [
      ["One of the main goals and missions of Bulcas is to protect human rights and freedoms in any interaction with Bulcas. This is implemented by working according to GDPR", 0.293],
      ["standards. General Data Protection Regulation (GDPR) is to protect individuals fundamental rights and freedoms, particularly their right to protect their personal data.", 0.35],
    ],
  },
  {
    title: "Sumsub",
    logo: <SumsubMark />,
    lines: [["Bulcas is pleased to announce its partnership with Sumsub, a leading service for user verification. This partnership allows us to ensure the highest level of data protection", 0.288]],
  },
];

export default function App() {
  return (
    <Window>
      <GlobalStyle />
      <TabStrip>
        <StripShade>
          <StripTools>
            <svg width="17" height="16" viewBox="0 0 17 16" {...stroke} strokeWidth="1.1">
              <path d="M7.4 6.6 Q7.4 5.2 8.6 4.8 L14.4 3.2 Q16 2.8 16 4.4 V9.4 Q16 10.8 14.8 11.4 L9.2 14.4 Q7.4 15.2 7.4 13.4Z" />
              <path d="M4.8 12.6 Q4 12.4 4 11.4 V5 Q4 3.8 5 3.2 L11 1.4 M2 10.6 Q1 10.4 1 9.2 V4 Q1 2.8 2 2.2 L7.6 .8" />
            </svg>
            <svg width="14" height="14" viewBox="0 0 14 14" {...stroke} strokeWidth="1.3">
              <rect x=".8" y=".8" width="12.4" height="12.4" rx="2" />
              <path d="M1.4 2.4 H12.6" strokeWidth="3" />
              <path d="M4.6 3.6 V13" />
            </svg>
          </StripTools>
          <Tab $active $width={224}>
            <Favicon faded />
            <TabTitle $track={-0.34}>BULCAS.COM | Licenses</TabTitle>
            <Cross />
          </Tab>
        </StripShade>
        <StripShade>
          <StripRest $curved>
            <Tab $width={224}>
              <Favicon />
              <TabTitle $track={-0.31}>BULCAS.COM | Policies</TabTitle>
              <Cross />
            </Tab>
            <StripDivider />
            <svg width="13" height="13" viewBox="0 0 13 13" {...stroke} strokeWidth="1.2">
              <path d="M6.5 .5 V12.5 M.5 6.5 H12.5" />
            </svg>
          </StripRest>
        </StripShade>
        <StripRest>
          <WindowControls>
            <svg width="11" height="11" viewBox="0 0 11 11" {...stroke} strokeWidth="1.1">
              <path d="M.8 5.5 H10" />
            </svg>
            <svg width="11" height="11" viewBox="0 0 11 11" {...stroke} strokeWidth="1.1">
              <rect x="1" y="3" width="7" height="7" rx="1.4" />
              <path d="M3.4 1 H8 Q10 1 10 3 V7.6" />
            </svg>
            <Cross size={10} w={0.8} />
          </WindowControls>
        </StripRest>
      </TabStrip>

      <Toolbar>
        <NavButtons>
          <svg width="17" height="17" viewBox="0 0 17 17" {...stroke} strokeWidth="1.1">
            <path d="M16 8.5 H1.8 M8 2.3 L1.8 8.5 L8 14.7" />
          </svg>
          <svg width="17" height="17" viewBox="0 0 17 17" {...stroke} strokeWidth="1.2">
            <path d="M15.6 8.6 A7 7 0 1 1 12.8 3 L15 5 M15.4 1.2 V5.2 H11.2" />
          </svg>
        </NavButtons>
        <AddressBar>
          <LockBadge>
            <svg width="13" height="14" viewBox="0 0 13 14" {...stroke} strokeWidth="1" color="#5c5c5c">
              <rect x="1" y="5" width="11" height="8" rx="1.6" />
              <path d="M4 5 V3.4 Q4 1 6.5 1 T9 3.4 V5" />
              <circle cx="6.5" cy="9" r=".6" fill="currentColor" />
            </svg>
          </LockBadge>
          <Url>
            https://<b>bulcas.com</b>/licenses
          </Url>
          <AddressTools>
            <Translate>aあ</Translate>
            <svg width="16" height="14" viewBox="0 0 16 14" {...stroke} strokeWidth="1">
              <path d="M1 13 L5.2 2.6 L9.4 13 M2.6 9.4 H7.8 M10 3.2 Q11.4 4.6 10.6 6.6 M12 1 Q14.8 3.4 13.4 7" />
            </svg>
            <svg width="16" height="16" viewBox="0 0 16 16" {...stroke} strokeWidth="1">
              <path d="M8 1 L10.1 5.6 L15 6.2 L11.4 9.6 L12.4 14.6 L8 12.2 L3.6 14.6 L4.6 9.6 L1 6.2 L5.9 5.6Z" />
            </svg>
          </AddressTools>
        </AddressBar>
        <ToolbarTools>
          <svg width="15" height="16" viewBox="0 0 15 16" {...stroke} strokeWidth="1.2">
            <path d="M4 3 H6 Q6 .8 7.7 .8 T9.4 3 H12.6 Q13.4 3 13.4 3.8 V6.2 Q11 6.2 11 8.2 T13.4 10.2 V12.6 Q13.4 13.6 12.4 13.6 H9.6 Q9.4 15.2 7.8 15.2 T6 13.6 H3.8 Q3 13.6 3 12.6 V10 Q.8 9.8 .8 8.2 T3 6.4 V4 Q3 3 4 3Z" />
          </svg>
          <ToolSlot $before={11.5}>
            <ThinRule $h={15} />
          </ToolSlot>
          <ToolSlot $before={12.5}>
            <svg width="14" height="14" viewBox="0 0 14 14" {...stroke} strokeWidth="1.1">
              <path d="M4.2 11 V3.2 L10.2 1 V6 M4.2 5.6 L10.2 3.4" />
              <circle cx="2.6" cy="11" r="1.6" />
              <circle cx="9.8" cy="10" r="3.6" fill="#1b1b1b" stroke="none" />
              <path d="M9.8 8.4 V11.4 M8.4 10.2 L9.8 11.6 L11.2 10.2" stroke="#fff" strokeWidth=".8" />
            </svg>
          </ToolSlot>
          <ToolSlot $before={18}>
            <svg width="16" height="16" viewBox="0 0 16 16" {...stroke} strokeWidth="1.1">
              <path d="M10.6 5.6 L9 5.4 L7 1 L5 5.4 L.8 6 L4 9.2 L3.2 14 L7 12 M10 6.4 H15.2 M9 9.4 H15.2 M10.4 12.4 H15.2" />
            </svg>
          </ToolSlot>
          <ToolSlot $before={15.5}>
            <svg width="21" height="21" viewBox="0 0 21 21">
              <circle cx="10.5" cy="10.5" r="10.5" fill="#cdcac7" />
              <circle cx="10.5" cy="7.6" r="4.4" fill="#8b8784" />
              <path d="M3.4 16.4 Q3.6 13.6 6.4 13.6 H14.6 Q17.4 13.6 17.6 16.4 Q14.8 19.6 10.5 19.6 T3.4 16.4Z" fill="#8b8784" />
            </svg>
          </ToolSlot>
          <ToolSlot $before={16.5}>
            <svg width="13" height="4" viewBox="0 0 13 4" fill="#1b1b1b">
              <circle cx="1.6" cy="2" r="1.3" />
              <circle cx="6.5" cy="2" r="1.3" />
              <circle cx="11.4" cy="2" r="1.3" />
            </svg>
          </ToolSlot>
          <ToolSlot $before={18.5}>
            <Ribbon size={21} id="barRibbon" />
          </ToolSlot>
        </ToolbarTools>
      </Toolbar>

      <Bookmarks>
        {bookmarks.map((b) => (
          <Bookmark key={b.label} $width={b.width} $gap={b.gap}>
            {b.icon}
            <span>{b.label}</span>
          </Bookmark>
        ))}
        <BookmarkEnd>
          <svg width="7" height="12" viewBox="0 0 7 12" {...stroke} strokeWidth="1.3">
            <path d="M1 1 L6 6 L1 11" />
          </svg>
          <ThinRule $h={15} />
          <Bookmark $gap={5}>
            <svg width="15" height="13" viewBox="0 0 15 13" {...stroke} strokeWidth="1.1">
              <path d="M.7 2.6 Q.7 .8 2.4 .8 H5 L7 2.6 H12.6 Q14.3 2.6 14.3 4.2 V10.4 Q14.3 12.2 12.6 12.2 H2.4 Q.7 12.2 .7 10.4Z M.8 4.6 H5 L7 2.6" />
            </svg>
            <span>Otros favoritos</span>
          </Bookmark>
        </BookmarkEnd>
      </Bookmarks>

      <PageFrame>
        <Page>
          <Sidebar>
            <LogoBox>
              <Logo>
                <LogoGlyph />
              </Logo>
            </LogoBox>
            <ModeButton>
              <Flame />
              GAMES
            </ModeButton>
            <ModeButton>
              <Sevens />
              SLOTS
            </ModeButton>
            <IconGroup>
              {menuA.map((icon, i) => (
                <IconCell key={i}>{icon}</IconCell>
              ))}
            </IconGroup>
            <IconGroup>
              {menuB.map((icon, i) => (
                <IconCell key={i}>{icon}</IconCell>
              ))}
            </IconGroup>
          </Sidebar>
          <Content>
            <Card $cut>
              <Line $track={0.358}>for regulating gambling and supervising gaming law in Great Britain.</Line>
            </Card>
            {cards.map((card) => (
              <Card key={card.title}>
                <CardHead>
                  {card.logo}
                  <CardTitle $track={card.track}>{card.title}</CardTitle>
                </CardHead>
                {card.lines.map(([text, track]) => (
                  <Line key={text} $track={track}>
                    {text}
                  </Line>
                ))}
              </Card>
            ))}
          </Content>
          <ScrollThumb />
          <SupportLabel>Live support</SupportLabel>
          <SupportButton>
            <svg width="32" height="26" viewBox="0 0 32 26">
              <path d="M0 13 Q0 0 11 0 H21 Q32 0 32 12.6 T21 25.4 H1.6 Q0 25.4 0 23.8Z" fill="#fff" />
              <circle cx="9.6" cy="12.7" r="2" fill="#3f78fb" />
              <circle cx="16" cy="12.7" r="2" fill="#3f78fb" />
              <circle cx="22.4" cy="12.7" r="2" fill="#3f78fb" />
            </svg>
          </SupportButton>
        </Page>
      </PageFrame>

      <Taskbar>
        {apps.map((app, i) => (
          <AppSlot key={i} $mark={app.mark}>
            <AppTile $focused={app.mark === "focused"}>{app.icon}</AppTile>
          </AppSlot>
        ))}
        <Tray>
          <svg width="11" height="6" viewBox="0 0 11 6" {...stroke} strokeWidth="1.2">
            <path d="M1 5.2 L5.5 .8 L10 5.2" />
          </svg>
          <Stack $align="center" $width={60}>
            <div>ESP</div>
            <div>LAA</div>
          </Stack>
          <TrayIcons>
            <svg width="16" height="16" viewBox="0 0 16 16" {...stroke} strokeWidth="1.1">
              <path d="M10.4 1.6 H2.2 Q1 1.6 1 2.8 V11 Q1 12.2 2.2 12.2 H11.4 M5.6 12.4 V15 M3.8 15 H10.6 V12.4" />
              <path d="M11.4 1 H15 V4.4 Q15 5.6 13.2 5.6 T11.4 4.4Z M13.2 5.6 V14.6" />
            </svg>
            <svg width="17" height="14" viewBox="0 0 17 14" {...stroke} strokeWidth="1.1">
              <path d="M1 5 H3.4 L7 1.8 V12.2 L3.4 9 H1Z M9.2 5 Q10.4 7 9.2 9" />
              <path d="M11.6 3.2 Q14 7 11.6 10.8 M14 1.6 Q17.2 7 14 12.4" strokeOpacity=".3" />
            </svg>
            <svg width="16" height="13" viewBox="0 0 16 13">
              <rect x="1" y="3.6" width="12.4" height="7.6" rx="1.6" fill="#3b3b44" stroke="#1b1b22" strokeWidth="1.2" />
              <path d="M14.6 6.2 V9" stroke="#1b1b22" strokeWidth="1.6" strokeLinecap="round" />
              <path d="M4.2 0 L.4 5.2 H2.8 L1.8 8.4 L5.8 3.4 H3.6Z" fill="#1b1b22" stroke="#e2d5e8" strokeWidth=".7" />
            </svg>
          </TrayIcons>
          <Stack $align="right" $width={73}>
            <div>5:54 p. m.</div>
            <div>21/06/2025</div>
          </Stack>
        </Tray>
      </Taskbar>
    </Window>
  );
}
